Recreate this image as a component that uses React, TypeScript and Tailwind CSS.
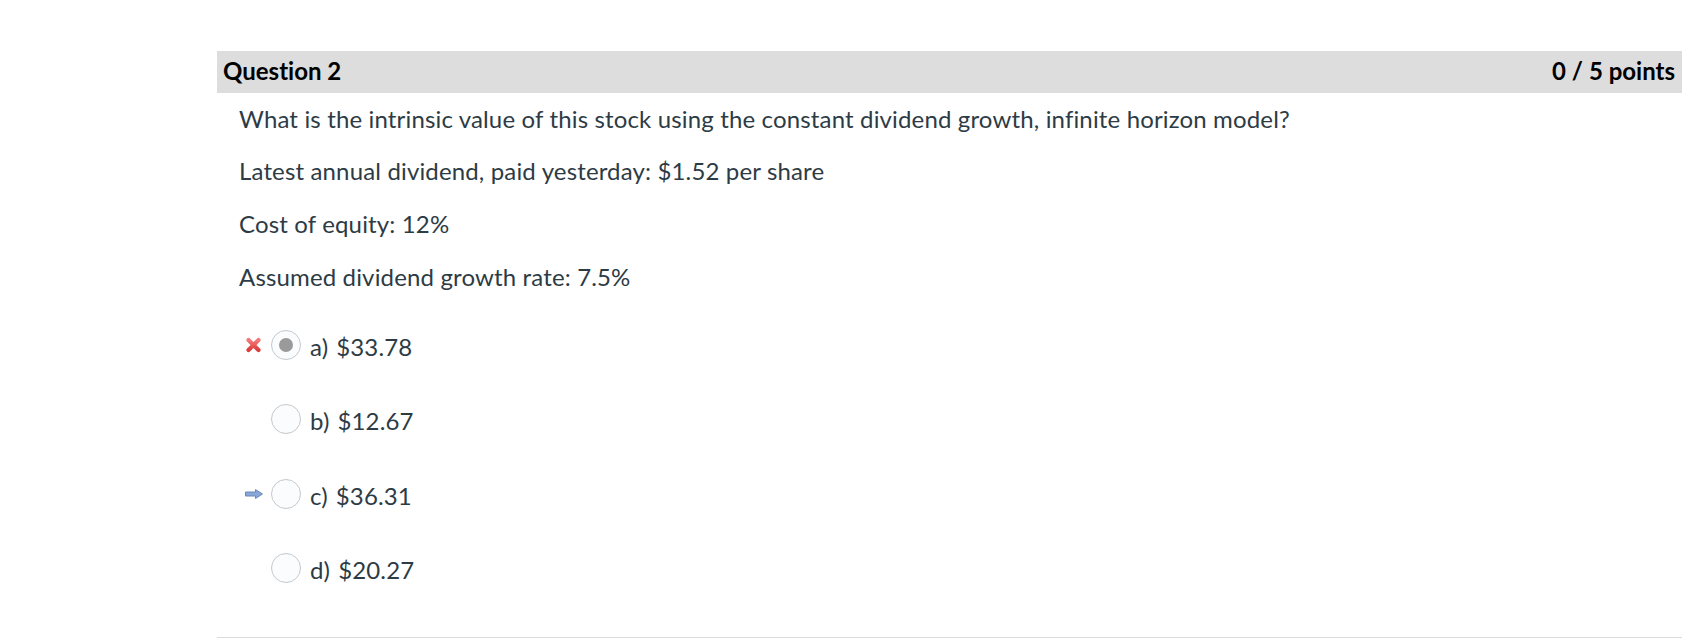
const font = { fontFamily: 'Lato, "Noto Sans", sans-serif' }

const OPTIONS: { key: string; label: string; value: string; mark?: 'wrong' | 'correct'; selected?: boolean }[] = [
  { key: 'a', label: 'a)', value: '$33.78', mark: 'wrong', selected: true },
  { key: 'b', label: 'b)', value: '$12.67' },
  { key: 'c', label: 'c)', value: '$36.31', mark: 'correct' },
  { key: 'd', label: 'd)', value: '$20.27' },
]

function WrongIcon() {
  return (
    <svg viewBox="0 0 16 16" className="h-[16px] w-[17px]" aria-hidden="true">
      <defs>
        <linearGradient id="xg" x1="0" y1="0" x2="0" y2="1">
          <stop offset="0" stopColor="#f47a7a" />
          <stop offset="1" stopColor="#dd3c3c" />
        </linearGradient>
      </defs>
      <path d="M3 3 L13 13 M13 3 L3 13" stroke="url(#xg)" strokeWidth="4.2" strokeLinecap="round" fill="none" />
    </svg>
  )
}

function CorrectArrow() {
  return (
    <svg viewBox="0 0 18 10" className="h-[10px] w-[18px]" aria-hidden="true">
      <path
        d="M0.5 3 H10.5 V0.5 L17.5 5 L10.5 9.5 V7 H0.5 Z"
        fill="#8aa6d6"
        stroke="#6a88bd"
        strokeWidth="1"
        strokeLinejoin="round"
      />
    </svg>
  )
}

function Radio({ selected }: { selected?: boolean }) {
  return (
    <span className="flex h-[30px] w-[30px] shrink-0 items-center justify-center rounded-full border border-[#c4c9cd] bg-[#fbfcfd]">
      {selected && <span className="h-[14px] w-[14px] rounded-full bg-[#9a9a9a]" />}
    </span>
  )
}

export default function App() {
  return (
    <div className="min-h-[638px] bg-white [font-variant-ligatures:none]" style={font}>
      <div className="ml-[217px] mr-[9px] pt-[51px]">
        {/* Question header */}
        <div className="flex h-[42px] items-start justify-between bg-[#dddddd] pl-[6px] pr-[7px] pt-[5px] text-[24px] font-bold leading-[30px] text-black">
          <span>Question 2</span>
          <span>0 / 5 points</span>
        </div>

        {/* Question body */}
        <div className="flex flex-col gap-[22.8px] pl-[22px] pt-[10.5px] text-[24px] leading-[30px] tracking-[0.15px] text-[#2d3b45]">
          <p>What is the intrinsic value of this stock using the constant dividend growth, infinite horizon model?</p>
          <p>Latest annual dividend, paid yesterday: $1.52 per share</p>
          <p>Cost of equity: 12%</p>
          <p>Assumed dividend growth rate: 7.5%</p>
        </div>

        {/* Answers */}
        <div className="flex flex-col gap-[44.5px] pb-[53.5px] pl-[28px] pt-[37.9px] text-[24px] leading-[30px] tracking-[0.15px] text-[#2d3b45]">
          {OPTIONS.map((o) => (
            <div key={o.key} className="flex h-[30px] items-start">
              <span className="flex h-[30px] w-[26px] items-center">
                {o.mark === 'wrong' && <WrongIcon />}
                {o.mark === 'correct' && <CorrectArrow />}
              </span>
              <Radio selected={o.selected} />
              <span className="ml-[9px] pt-[2px]">{o.label}</span>
              <span className="ml-[8px] pt-[2px]">{o.value}</span>
            </div>
          ))}
        </div>

        <div className="h-px bg-[#dcdcdc]" />
      </div>
    </div>
  )
}
